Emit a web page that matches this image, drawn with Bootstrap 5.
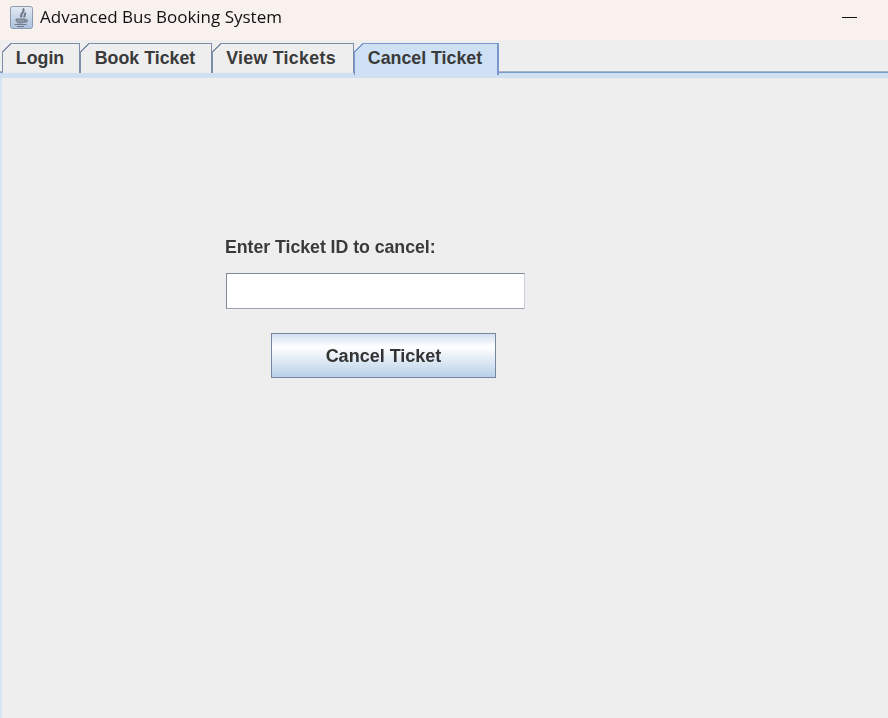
<!DOCTYPE html>
<html lang="en">
<head>
    <meta charset="UTF-8">
    <meta name="viewport" content="width=device-width, initial-scale=1.0">
    <title>Advanced Bus Booking System</title>
    <link href="https://cdn.jsdelivr.net/npm/bootstrap@5.3.0/dist/css/bootstrap.min.css" rel="stylesheet">
    <style>
        html, body { height: 100%; }
        body {
            background-color: #eeeeee;
            color: #333333;
            font-family: "Liberation Sans", Arial, sans-serif;
        }
        .app-window { height: 718px; overflow: hidden; filter: blur(0.35px); }
        .title-strip {
            height: 40px;
            background-color: #f9f1ee;
            padding: 0 31px 6px 10px;
        }
        .title-text {
            font-family: "Open Sans", "Noto Sans", sans-serif;
            font-size: 17px;
            color: #111111;
            margin-left: 7px;
        }
        .min-mark { width: 15px; height: 1px; background-color: #111111; }
        .tab-strip {
            height: 33px;
            padding: 3px 0 0 2px;
            border-bottom: 1px solid #7f9bc9;
            box-shadow: inset 0 -1px 0 #a9b4c6;
        }
        .swing-tab {
            position: relative;
            height: 30px;
            padding-right: 2px;
            border: 1px solid #7e8ea8;
            border-bottom: 0;
            background-color: #eeeeee;
            font-size: 17.8px;
            font-weight: 700;
            line-height: 28px;
            text-align: center;
            color: #3a3a3a;
        }
        .swing-tab::before {
            content: "";
            position: absolute;
            left: -1px;
            top: -1px;
            width: 9px;
            height: 9px;
            background: linear-gradient(135deg, #eeeeee 0 45%, #7e8ea8 45% 58%, transparent 58%);
        }
        .tab-wide { letter-spacing: 0.3px; padding-right: 4px; }
        .tab-active {
            background-color: #cde0f4;
            border-color: #7a96cf;
            border-width: 1px 2px 0 1px;
            height: 32px;
            margin-bottom: -2px;
            z-index: 1;
        }
        .tab-active::before {
            background: linear-gradient(135deg, #eeeeee 0 45%, #7a96cf 45% 58%, transparent 58%);
        }
        .tab-band { height: 5px; background-color: #cfe0f3; }
        .tab-page {
            flex: 1;
            border-left: 2px solid #d6e4f4;
            padding: 158px 0 0 223px;
        }
        .field-label { font-size: 17.8px; font-weight: 700; line-height: 22px; letter-spacing: -0.06px; color: #3a3a3a; }
        .ticket-input {
            width: 299px;
            height: 36px;
            margin: 15px 0 0 1px;
            border: 1px solid;
            border-color: #808b9a #c9d0da #9aa3af #808b9a;
            border-radius: 0;
            background-color: #ffffff;
        }
        .ticket-input:focus { outline: 0; box-shadow: none; }
        .cancel-btn {
            display: block;
            width: 225px;
            height: 45px;
            margin: 24px 0 0 46px;
            padding: 2px 0 0;
            border: 1px solid #75879f;
            border-radius: 0;
            background: linear-gradient(180deg, #d3e0ef 0%, #ffffff 30%, #e6eef7 55%, #b8d0e8 100%);
            font-size: 18px;
            font-weight: 700;
            color: #333333;
        }
    </style>
</head>
<body>
    <div class="app-window d-flex flex-column">
        <div class="title-strip d-flex align-items-center">
            <svg width="23" height="23" viewBox="0 0 23 23">
                <defs>
                    <linearGradient id="iconBg" x1="0" y1="0" x2="0" y2="1">
                        <stop offset="0" stop-color="#e4ebf4"/>
                        <stop offset="1" stop-color="#a9c0dc"/>
                    </linearGradient>
                </defs>
                <rect x="0.5" y="0.5" width="22" height="22" rx="2" fill="url(#iconBg)" stroke="#8b9bb0"/>
                <path d="M13 2.5 C16 6 9 7.5 11.5 11.5 M15 6.5 C16 8.5 13.5 9.5 14.5 11.5" fill="none" stroke="#6f7a88" stroke-width="2"/>
                <path d="M6 13 H15 C15 16 14 17 10.5 17 C7 17 6 16 6 13 Z M15 13.5 C18.5 13 18.5 16.5 14.5 16.5" fill="#8d98a5" stroke="#6f7a88" stroke-width="0.9"/>
                <path d="M4.5 18.5 H16.5 M7 20.5 H14" stroke="#6f7a88" stroke-width="1.1"/>
            </svg>
            <span class="title-text">Advanced Bus Booking System</span>
            <div class="min-mark ms-auto"></div>
        </div>
        <div class="tab-strip d-flex align-items-start">
            <div class="swing-tab" style="width: 78px">Login</div>
            <div class="swing-tab" style="width: 132px">Book Ticket</div>
            <div class="swing-tab tab-wide" style="width: 142px">View Tickets</div>
            <div class="swing-tab tab-active" style="width: 145px">Cancel Ticket</div>
        </div>
        <div class="tab-band"></div>
        <div class="tab-page">
            <div class="field-label">Enter Ticket ID to cancel:</div>
            <input type="text" class="ticket-input d-block" aria-label="Ticket ID">
            <button type="button" class="btn cancel-btn">Cancel Ticket</button>
        </div>
    </div>
    <script src="https://cdn.jsdelivr.net/npm/bootstrap@5.3.0/dist/js/bootstrap.bundle.min.js"></script>
</body>
</html>
